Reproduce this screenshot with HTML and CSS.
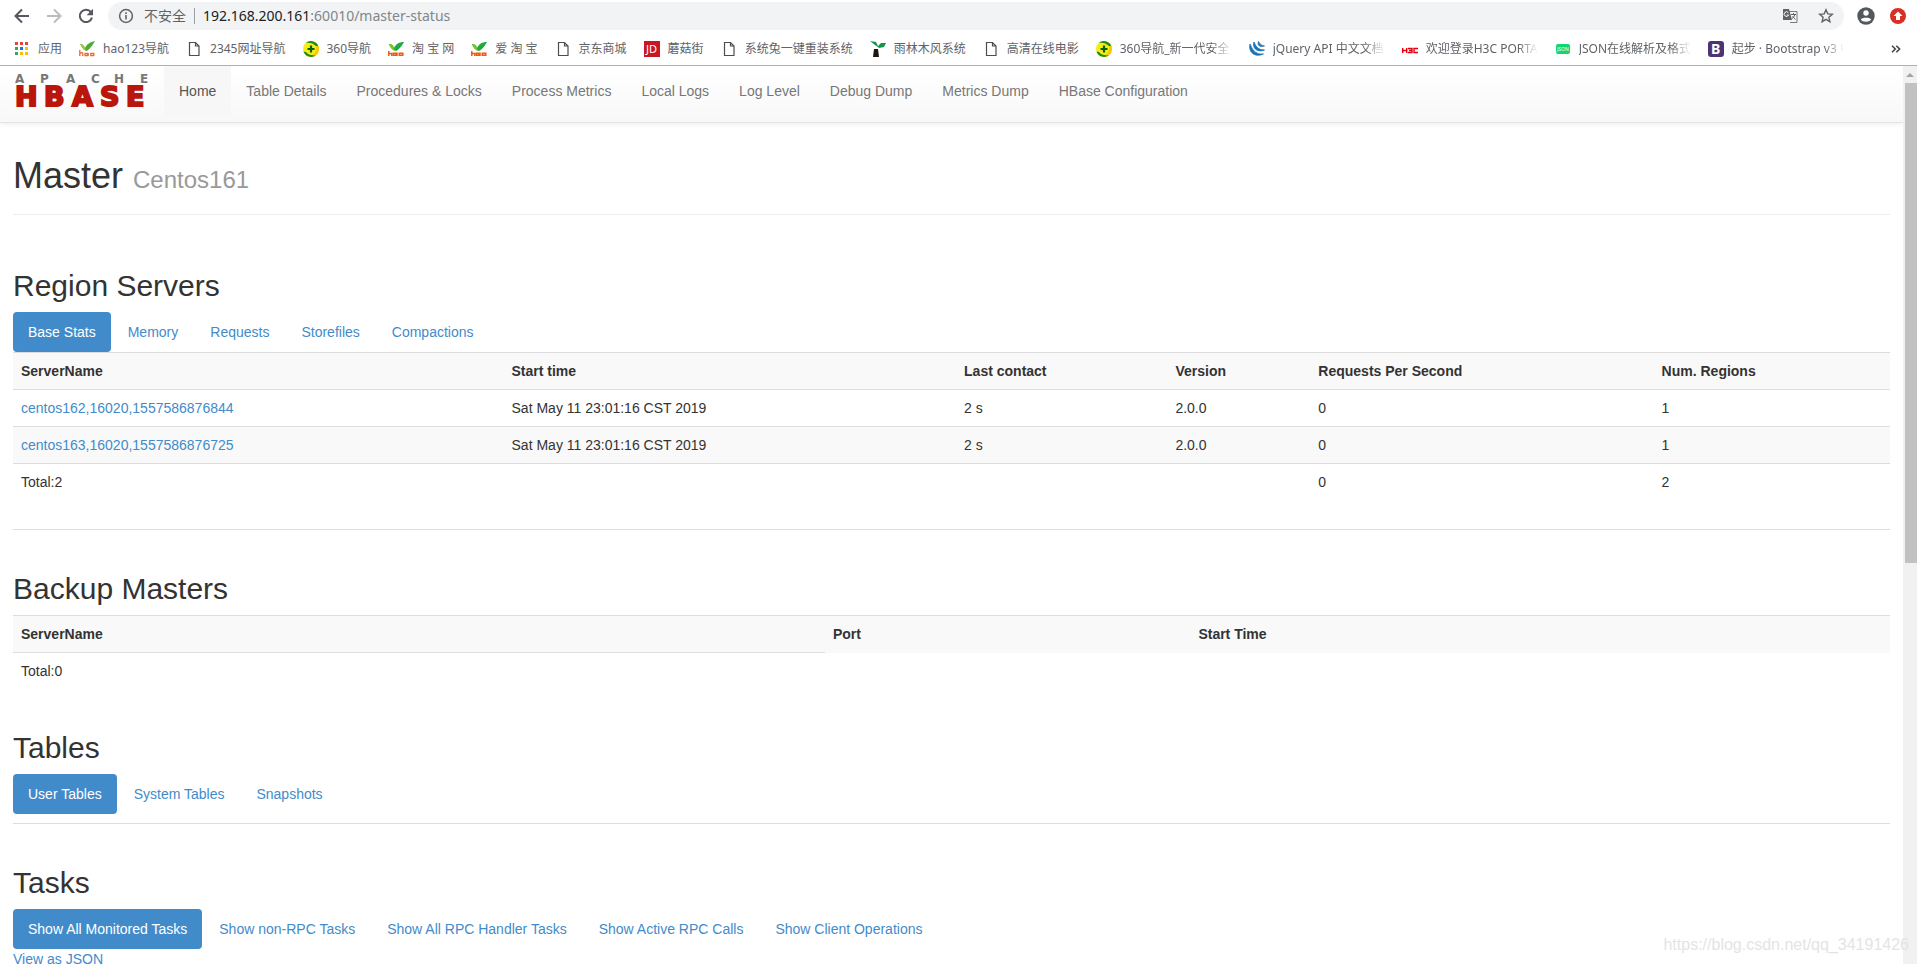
FILE: index.html
```html
<!DOCTYPE html>
<html lang="en">
<head>
<meta charset="utf-8">
<title>Master: Centos161</title>
<link rel="stylesheet" href="styles.css">
</head>
<body>
<svg class="defs" aria-hidden="true">
  <symbol id="file" viewBox="0 0 16 16"><path d="M3.500 1.500h6l3.500 3.500v9.500h-9.500zM9.500 1.500v3.500h3.500" fill="none" stroke="#4a4d51" stroke-width="1.200"/></symbol>
  <symbol id="hao" viewBox="0 0 16 16"><path d="M1 3c3 0 4 2 5 4 2-4 5-6 10-7-2 3-3 6-8 10C4 9 3 6 1 3z" fill="#4faa3c"/><path d="M1 3c3 0 4 2 5 4l1 3C4 9 3 6 1 3z" fill="#a3c93a"/><path d="M.8 9v6M.8 12.500q3-2 3 .5v2M6 12.300h2.500v2.200H6zM9.200 12v3M11.800 12.300h3v2.200h-3z" fill="none" stroke="#ee6a32" stroke-width="1.300"/></symbol>
  <symbol id="tao" viewBox="0 0 16 16"><path d="M1 3c3 0 4 1 5 4 2-4 5-6 10-6-2 3-3 6-8 9C4 9 2 6 1 3z" fill="#1faa3f"/><path d="M1 3c3 0 4 1 5 4l1 3C4 9 2 6 1 3z" fill="#7ac51e"/><path d="M.8 10v5M.8 12.500h3v2.500M5.500 12.300h2.500v2h-2.500zM9 11.500v3.500M11.300 12.300h3.500v2h-3.500z" fill="none" stroke="#f4570f" stroke-width="1.500"/></symbol>
  <symbol id="s360" viewBox="0 0 16 16"><circle cx="8" cy="8" r="8" fill="#f5ee16"/><path d="M3 1.800A8 8 0 0 1 15.500 5.500L13 5Q9 1 3 1.800zM.5 10.500A8 8 0 0 0 13 14.200Q6 15 3 11z" fill="#1c8a17"/><path d="M13 5l2.500.5a8 8 0 0 1-2.500 8.700q-2 .3-4-.2 5-3 4-9z" fill="#fcc60c"/><path d="M8 4.500v7M4.500 8h7" stroke="#07620f" stroke-width="2.200"/></symbol>
</svg>
<div class="window">
  <header class="chrome">
    <div class="toolbar">
      <button class="tool" aria-label="Back"><svg viewBox="0 0 16 16"><path d="M15 8H2M8 1.500L1.500 8 8 14.500" fill="none" stroke="#55585c" stroke-width="2"/></svg></button>
      <button class="tool" aria-label="Forward"><svg viewBox="0 0 16 16"><path d="M1 8h13M8 1.500L14.500 8 8 14.500" fill="none" stroke="#babcbe" stroke-width="2"/></svg></button>
      <button class="tool" aria-label="Reload"><svg viewBox="0 0 16 16"><path d="M13 4.200A6.200 6.200 0 1 0 14 9.500" fill="none" stroke="#55585c" stroke-width="2"/><path d="M15 .8v6.400H8.600z" fill="#55585c"/></svg></button>
      <div class="address">
        <svg class="info" viewBox="0 0 16 16"><circle cx="8" cy="8" r="6.400" fill="none" stroke="#5f6368" stroke-width="1.500"/><path d="M8 7v4.500M8 4.200v1.700" stroke="#5f6368" stroke-width="1.600"/></svg>
        <span class="insecure">不安全</span>
        <span class="url"><b>192.168.200.161</b>:60010/master-status</span>
        <svg class="translate" viewBox="0 0 16 16"><path d="M6 3.500h9v11H8" fill="none" stroke="#777a7e"/><path d="M1 1h6l3 11H1z" fill="#5f6368"/><path d="M6.300 4.700a2.300 2.300 0 1 0 .3 2.300H4.800" fill="none" stroke="#fff"/><path d="M9 6.500h5M11.500 5v1.500M13 6.500q-1 3-3 4M10.500 8.500l3 3" fill="none" stroke="#5f6368"/></svg>
        <svg class="star" viewBox="0 0 16 16"><path d="M8 1.800l1.800 4.100 4.500.4-3.400 3 1 4.400L8 11.400l-3.900 2.300 1-4.400-3.400-3 4.500-.4z" fill="none" stroke="#5f6368" stroke-width="1.400"/></svg>
      </div>
      <svg class="profile" viewBox="0 0 18 18"><circle cx="9" cy="9" r="8.700" fill="#54575b"/><circle cx="9" cy="6" r="2.700" fill="#fff"/><path d="M3.800 12.500c1-2.500 9.400-2.500 10.400 0-2 3-8.400 3-10.400 0z" fill="#fff"/></svg>
      <svg class="update" viewBox="0 0 16 16"><circle cx="8" cy="8" r="8" fill="#d93025"/><path d="M8 3.500L12.500 8H10v4H6V8H3.500z" fill="#fff"/></svg>
    </div>
    <nav class="bookmarks">
      <a href="#"><svg viewBox="0 0 16 16"><path fill="#ea4335" d="M1 1h3v3H1zM6 1h3v3H6zM11 1h3v3h-3z"/><path fill="#34a853" d="M1 6h3v3H1zM1 11h3v3H1z"/><path fill="#1a73e8" d="M6 6h3v3H6z"/><path fill="#fbbc05" d="M11 6h3v3h-3zM6 11h3v3H6zM11 11h3v3h-3z"/></svg><span>应用</span></a>
      <a href="#"><svg><use href="#hao"/></svg><span>hao123导航</span></a>
      <a href="#"><svg><use href="#file"/></svg><span>2345网址导航</span></a>
      <a href="#"><svg><use href="#s360"/></svg><span>360导航</span></a>
      <a href="#"><svg><use href="#tao"/></svg><span>淘 宝 网</span></a>
      <a href="#"><svg><use href="#tao"/></svg><span>爱 淘 宝</span></a>
      <a href="#"><svg><use href="#file"/></svg><span>京东商城</span></a>
      <a href="#"><svg viewBox="0 0 16 16"><path fill="#c81623" d="M0 0h16v16H0z"/><text x="2" y="12" font-size="11" fill="#fff">JD</text></svg><span>蘑菇街</span></a>
      <a href="#"><svg><use href="#file"/></svg><span>系统兔一键重装系统</span></a>
      <a href="#"><svg viewBox="0 0 16 16"><path d="M0 0l6 1 2 4 3-3h5l-2 4-5 1-1-1-3-2z" fill="#129447"/><path d="M4 8h4l1 8H3z" fill="#1c1712"/></svg><span>雨林木风系统</span></a>
      <a href="#"><svg><use href="#file"/></svg><span>高清在线电影</span></a>
      <a href="#"><svg><use href="#s360"/></svg><span class="cut">360导航_新一代安全_</span></a>
      <a href="#"><svg viewBox="0 0 16 16"><path d="M1 3C-1 11 6 17 14.500 13Q5 14.500 1 3zM5 1c-2 6 3 11 10.500 8Q8 9.500 5 1zM9.500.5c-1.500 4 1.500 6 6 4.500Q11.500 5 9.500.5z" fill="#1b72b4" stroke="#1b72b4" stroke-width=".8"/></svg><span class="cut">jQuery API 中文文档</span></a>
      <a href="#"><svg viewBox="0 0 16 16"><path d="M.7 7v5M.7 9.500h4M4.700 7v5M6 7.500h4v4H6M7 9.500h3M16 7.500h-4v4h4" fill="none" stroke="#e60012" stroke-width="1.400"/></svg><span class="cut">欢迎登录H3C PORTA</span></a>
      <a href="#"><svg viewBox="0 0 16 16"><rect x="1" y="3" width="14" height="10" rx="2" fill="#12d573"/><text x="2" y="10" font-size="5" fill="#fff">JSON</text></svg><span class="cut">JSON在线解析及格式</span></a>
      <a href="#"><svg viewBox="0 0 16 16"><rect width="16" height="16" rx="3" fill="#4b3474"/><text x="3" y="13" font-size="14" font-weight="bold" fill="#fff">B</text></svg><span class="cut">起步 · Bootstrap v3 中</span></a>
      <button class="more" aria-label="More bookmarks"><svg viewBox="0 0 10 8"><path d="M1 .7L4.300 4 1 7.300M5.300.7L8.600 4 5.300 7.300" fill="none" stroke="#44474b" stroke-width="1.600"/></svg></button>
    </nav>
  </header>
  <div class="viewport">
    <div class="page">
      <nav class="navbar">
        <a class="brand" href="#"><svg viewBox="0 0 134 34" role="img" aria-label="Apache HBase"><text class="brand-top" x="0 25 51 76 99 125" y="9">APACHE</text><text class="brand-main" x="0 29 57 85 111" y="32">HBASE</text></svg></a>
        <ul class="nav">
          <li><a class="current" href="#">Home</a></li>
          <li><a href="#">Table Details</a></li>
          <li><a href="#">Procedures &amp; Locks</a></li>
          <li><a href="#">Process Metrics</a></li>
          <li><a href="#">Local Logs</a></li>
          <li><a href="#">Log Level</a></li>
          <li><a href="#">Debug Dump</a></li>
          <li><a href="#">Metrics Dump</a></li>
          <li><a href="#">HBase Configuration</a></li>
        </ul>
      </nav>
      <main class="content">
        <h1>Master <small>Centos161</small></h1>
        <section class="servers">
          <h2>Region Servers</h2>
          <ul class="pills">
            <li><a class="active" href="#">Base Stats</a></li>
            <li><a href="#">Memory</a></li>
            <li><a href="#">Requests</a></li>
            <li><a href="#">Storefiles</a></li>
            <li><a href="#">Compactions</a></li>
          </ul>
          <table>
            <tr><th>ServerName</th><th>Start time</th><th>Last contact</th><th>Version</th><th>Requests Per Second</th><th>Num. Regions</th></tr>
            <tr><td><a href="#">centos162,16020,1557586876844</a></td><td>Sat May 11 23:01:16 CST 2019</td><td>2 s</td><td>2.0.0</td><td>0</td><td>1</td></tr>
            <tr><td><a href="#">centos163,16020,1557586876725</a></td><td>Sat May 11 23:01:16 CST 2019</td><td>2 s</td><td>2.0.0</td><td>0</td><td>1</td></tr>
            <tr><td>Total:2</td><td></td><td></td><td></td><td>0</td><td>2</td></tr>
          </table>
        </section>
        <section>
          <h2>Backup Masters</h2>
          <table>
            <tr><th>ServerName</th><th>Port</th><th>Start Time</th></tr>
            <tr><td>Total:0</td></tr>
          </table>
        </section>
        <section class="tables">
          <h2>Tables</h2>
          <ul class="pills">
            <li><a class="active" href="#">User Tables</a></li>
            <li><a href="#">System Tables</a></li>
            <li><a href="#">Snapshots</a></li>
          </ul>
        </section>
        <section>
          <h2>Tasks</h2>
          <ul class="pills">
            <li><a class="active" href="#">Show All Monitored Tasks</a></li>
            <li><a href="#">Show non-RPC Tasks</a></li>
            <li><a href="#">Show All RPC Handler Tasks</a></li>
            <li><a href="#">Show Active RPC Calls</a></li>
            <li><a href="#">Show Client Operations</a></li>
          </ul>
          <a href="#">View as JSON</a>
        </section>
      </main>
    </div>
    <div class="scrollbar"><svg viewBox="0 0 14 17"><path d="M3 11l4-4 4 4z" fill="#a3a3a3"/></svg><div class="thumb"></div></div>
  </div>
  <div class="watermark">https://blog.csdn.net/qq_34191426</div>
</div>
</body>
</html>
```
FILE: styles.css
```css
* { box-sizing: border-box; }
body { margin: 0; color: #333; background: #fff; font: 14px/20px "Liberation Sans", Arial, sans-serif; }
a { color: #428bca; text-decoration: none; }
ul { display: flex; margin: 0; padding: 0; list-style: none; }
button { padding: 0; border: 0; background: none; }
svg { display: block; flex: none; }
.defs { position: absolute; width: 0; height: 0; }
.window { position: relative; display: flex; flex-direction: column; height: 100vh; overflow: hidden; }

.chrome { flex: none; border-bottom: 1px solid #b0b0b0; font-family: "Noto Sans", "Noto Sans CJK SC", sans-serif; }
.toolbar { display: flex; align-items: center; height: 32px; padding: 0 11px 0 14px; }
.tool { width: 16px; height: 16px; margin-right: 16px; }
.tool:nth-child(3) { margin-right: 14px; }
.tool svg { width: 16px; height: 16px; }
.address { display: flex; flex: 1; align-items: center; height: 28px; padding: 0 10px; border-radius: 14px; background: #f1f3f4; color: #80868b; }
.info { width: 16px; height: 16px; margin-right: 10px; }
.insecure { padding-right: 8px; border-right: 1px solid #9aa0a6; color: #5f6368; line-height: 16px; }
.url { flex: 1; padding-left: 8px; }
.url b { color: #202124; font-weight: normal; }
.translate { width: 16px; height: 16px; margin-right: 20px; }
.star { width: 16px; height: 16px; }
.profile { width: 18px; height: 18px; margin: 0 15px 0 13px; }
.update { width: 16px; height: 16px; }
.bookmarks { display: flex; align-items: center; gap: 17px; height: 33px; padding: 0 16px 0 14px; font-size: 12px; }
.bookmarks a { display: flex; align-items: center; gap: 8px; color: #5f6368; white-space: nowrap; }
.bookmarks a svg { width: 16px; height: 16px; }
.bookmarks .cut { width: 112px; overflow: hidden; -webkit-mask-image: linear-gradient(90deg, #000 82%, transparent); mask-image: linear-gradient(90deg, #000 82%, transparent); }
.more { margin-left: auto; }
.more svg { width: 10px; height: 8px; }

.viewport { display: flex; flex: 1; min-height: 0; }
.page { flex: 1; min-width: 0; overflow: hidden; }
.navbar { display: flex; height: 57px; padding-left: 15px; border-bottom: 1px solid #e4e4e4; background: linear-gradient(#fff, #f8f8f8); box-shadow: 0 1px 5px rgba(0, 0, 0, .075); }
.brand { padding-top: 8px; margin-right: 15px; }
.brand svg { width: 134px; height: 34px; overflow: visible; }
.brand text { font-family: "DejaVu Sans", sans-serif; font-weight: bold; }
.brand-top { fill: #777; font-size: 12px; }
.brand-main { fill: #ba160c; stroke: #ba160c; stroke-width: 2px; font-size: 27px; }
.nav a { display: block; padding: 15px; color: #777; }
.nav .current { color: #555; background: #f7f7f7; }
.content { padding: 0 13px; }
h1, h2 { margin: 0; font-weight: 400; }
h1 { padding: 33px 0 18px; border-bottom: 1px solid #eee; font-size: 36px; line-height: 40px; }
small { color: #999; font-size: 24px; line-height: 24px; }
h2 { padding: 42px 0 10px; font-size: 30px; line-height: 33px; }
.pills { gap: 2px; }
.pills a { display: block; padding: 10px 15px; border-radius: 4px; }
.pills .active { color: #fff; background: #428bca; }
table { width: 100%; border-collapse: collapse; border-spacing: 0; }
th, td { padding: 8px; border-top: 1px solid #ddd; text-align: left; }
tr:nth-child(odd) > * { background: #f9f9f9; }
.servers { padding: 12px 0 29px; border-bottom: 1px solid #ddd; }
.tables { padding-bottom: 9px; border-bottom: 1px solid #ddd; }

.scrollbar { width: 14px; background: #f1f1f1; }
.scrollbar svg { width: 14px; height: 17px; }
.thumb { height: 53.5%; margin-left: 2px; background: #c1c1c1; }
.watermark { position: absolute; right: 8px; bottom: 9px; color: #e4e4e4; font-size: 16px; }
```
